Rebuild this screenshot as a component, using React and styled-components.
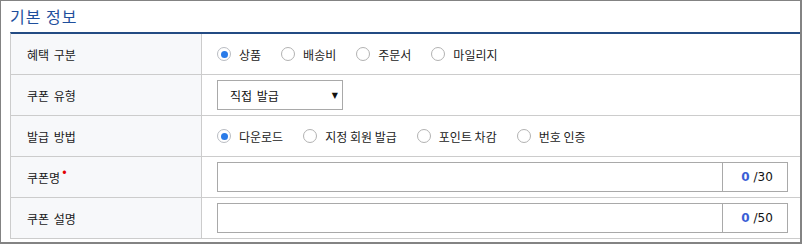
import React from "react";
import styled, { createGlobalStyle } from "styled-components";

const Global = createGlobalStyle`
  html, body { margin: 0; padding: 0; background: #fff; }
  body { font-family: "Noto Sans CJK KR", "Noto Sans", sans-serif; }
  * { box-sizing: border-box; }
`;

const Frame = styled.div`
  width: 802px;
  height: 244px;
  border-style: solid;
  border-color: #838383;
  border-width: 1px 2px 2px 1px;
  background: #fff;
  overflow: hidden;
  padding-left: 9px;
`;

const Title = styled.h2`
  margin: 0;
  height: 31px;
  padding-top: 4px;
  font-size: 16px;
  line-height: 22px;
  font-weight: 400;
  color: #1f4f9c;
  letter-spacing: 1px;
`;

const Table = styled.div`
  border-top: 2px solid #234b83;
  border-left: 1px solid #cccccc;
  display: grid;
  grid-template-columns: 191px 1fr;
  width: 800px;
`;

const Label = styled.div`
  height: 41px;
  background: #f7f8fa;
  border-right: 1px solid #cccccc;
  border-bottom: 1px solid #cccccc;
  display: flex;
  align-items: center;
  padding-left: 16px;
  font-size: 12px;
  color: #1a1a1a;
  word-spacing: 2px;
`;

const Required = styled.span`
  color: #e30000;
  font-size: 13px;
  margin-left: 2px;
  align-self: flex-start;
  margin-top: 8px;
  line-height: 12px;
`;

const Cell = styled.div`
  height: 41px;
  border-bottom: 1px solid #cccccc;
  display: flex;
  align-items: center;
  padding-left: 15px;
`;

const RadioGroup = styled.div`
  display: flex;
  align-items: center;
  gap: 20px;
`;

const RadioItem = styled.label`
  display: flex;
  align-items: center;
  gap: 8px;
  font-size: 12px;
  color: #222;
`;

const RadioCircle = styled.span`
  width: 14px;
  height: 14px;
  border-radius: 50%;
  border: 1px solid ${(p) => (p.$checked ? "#b9bcc2" : "#b2b2b2")};
  background: #fff;
  display: flex;
  align-items: center;
  justify-content: center;
  &::after {
    content: "";
    width: 7px;
    height: 7px;
    border-radius: 50%;
    background: ${(p) => (p.$checked ? "#2a7be8" : "transparent")};
  }
`;

const SelectBox = styled.div`
  width: 126px;
  height: 30px;
  border: 1px solid #a9a9a9;
  display: flex;
  align-items: center;
  justify-content: space-between;
  padding: 0 4px 0 12px;
  font-size: 12px;
  color: #111;
  word-spacing: 2px;
`;

const Arrow = styled.span`
  font-size: 8px;
  color: #111;
  font-family: "DejaVu Sans", sans-serif;
`;

const InputGroup = styled.div`
  width: 571px;
  height: 30px;
  border: 1px solid #a9a9a9;
  display: flex;
`;

const TextInput = styled.input`
  flex: 1;
  border: none;
  outline: none;
  padding: 0 8px;
  font-size: 12px;
  font-family: inherit;
`;

const Counter = styled.div`
  width: 65px;
  border-left: 1px solid #a9a9a9;
  display: flex;
  align-items: center;
  justify-content: center;
  font-family: "DejaVu Sans", "Liberation Sans", sans-serif;
  font-size: 12px;
  color: #111;
  padding-left: 4px;
`;

const Count = styled.span`
  color: #3b5fd6;
  font-weight: 700;
  margin-right: 4px;
`;

function Radio({ label, checked }) {
  return (
    <RadioItem>
      <RadioCircle $checked={checked} />
      {label}
    </RadioItem>
  );
}

export default function App() {
  return (
    <>
      <Global />
      <Frame>
        <Title>기본 정보</Title>
        <Table>
          <Label>혜택 구분</Label>
          <Cell>
            <RadioGroup>
              <Radio label="상품" checked />
              <Radio label="배송비" />
              <Radio label="주문서" />
              <Radio label="마일리지" />
            </RadioGroup>
          </Cell>

          <Label>쿠폰 유형</Label>
          <Cell>
            <SelectBox>
              <span>직접 발급</span>
              <Arrow>▼</Arrow>
            </SelectBox>
          </Cell>

          <Label>발급 방법</Label>
          <Cell>
            <RadioGroup>
              <Radio label="다운로드" checked />
              <Radio label="지정 회원 발급" />
              <Radio label="포인트 차감" />
              <Radio label="번호 인증" />
            </RadioGroup>
          </Cell>

          <Label>
            쿠폰명<Required>•</Required>
          </Label>
          <Cell>
            <InputGroup>
              <TextInput />
              <Counter>
                <Count>0</Count>/30
              </Counter>
            </InputGroup>
          </Cell>

          <Label>쿠폰 설명</Label>
          <Cell>
            <InputGroup>
              <TextInput />
              <Counter>
                <Count>0</Count>/50
              </Counter>
            </InputGroup>
          </Cell>
        </Table>
      </Frame>
    </>
  );
}
